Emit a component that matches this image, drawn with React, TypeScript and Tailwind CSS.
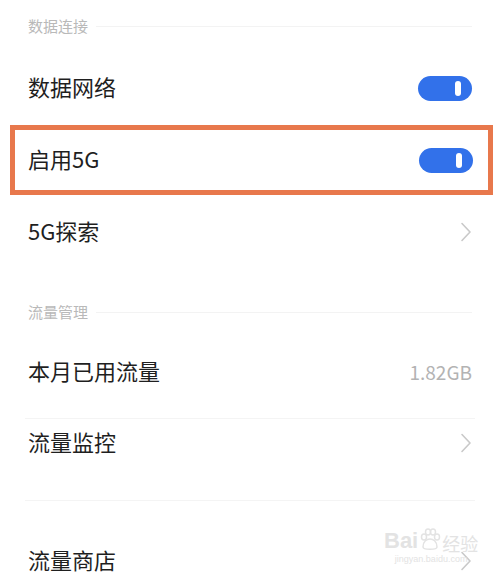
import { ReactNode } from "react";

const font = {
  fontFamily: '"Noto Sans CJK SC", "Noto Sans", sans-serif',
};

function Toggle() {
  return (
    <div className="w-[54px] h-[25px] rounded-full bg-[#3271ea] flex items-center justify-end pr-[11px]">
      <div className="w-[6px] h-[15px] rounded-full bg-white" />
    </div>
  );
}

function Chevron() {
  return (
    <svg width="12" height="20" viewBox="0 0 12 20" fill="none">
      <path
        d="M2 1.5 L10 10 L2 18.5"
        stroke="#c9c9c9"
        strokeWidth="1.6"
        strokeLinecap="round"
        strokeLinejoin="round"
      />
    </svg>
  );
}

function Paw() {
  return (
    <svg width="22" height="24" viewBox="0 0 22 24" fill="none" stroke="#e3e3e3" strokeWidth="1.5">
      <ellipse cx="5" cy="9" rx="2.5" ry="3" />
      <ellipse cx="9" cy="4" rx="2.5" ry="3" />
      <ellipse cx="14" cy="4" rx="2.5" ry="3" />
      <ellipse cx="18" cy="9" rx="2.5" ry="3" />
      <path d="M4 19 C4 13 8 11 11 11 C14 11 18 13 18 19 C18 22 4 22 4 19 Z" />
    </svg>
  );
}

function SectionHeader({ title, className }: { title: string; className: string }) {
  return (
    <div className={`flex items-center px-[28px] ${className}`}>
      <span className="text-[15px] text-[#b9b9b9] leading-none whitespace-nowrap mb-[2px]">
        {title}
      </span>
      <div className="flex-1 ml-[8px] h-px bg-[#f3f3f3]" />
    </div>
  );
}

function Row({
  label,
  right,
  className = "h-[72px]",
}: {
  label: string;
  right?: ReactNode;
  className?: string;
}) {
  return (
    <div className={`flex items-center justify-between px-[28px] ${className}`}>
      <span className="text-[22px] text-[#1f1f1f] leading-none mb-[5px]">{label}</span>
      {right}
    </div>
  );
}

export default function App() {
  return (
    <div className="w-[500px] h-[584px] bg-white overflow-hidden relative" style={font}>
      <SectionHeader title="数据连接" className="h-[52px]" />
      <Row label="数据网络" right={<Toggle />} />

      <div className="h-[72px] py-px pl-[10px] pr-[7px]">
        <div className="h-full border-[5px] border-[#e8784c] flex items-center justify-between pl-[13px] pr-[15px]">
          <span className="text-[22px] text-[#1f1f1f] leading-none mb-[5px]">启用5G</span>
          <Toggle />
        </div>
      </div>

      <Row label="5G探索" right={<Chevron />} />

      <SectionHeader title="流量管理" className="h-[68px] pt-[20px]" />
      <Row
        label="本月已用流量"
        right={<span className="text-[19px] text-[#b3b3b3] leading-none mb-[2px]">1.82GB</span>}
      />
      <div className="mt-[10px] mx-[25px] h-px bg-[#f4f4f4]" />
      <Row label="流量监控" right={<Chevron />} className="h-[48px]" />
      <div className="mt-[33px] mx-[25px] h-px bg-[#f4f4f4]" />
      <Row label="流量商店" right={<Chevron />} className="h-[120px]" />

      <div className="absolute left-[384px] top-[528px] flex flex-col items-center text-[#e3e3e3] pointer-events-none">
        <div className="flex items-end leading-none">
          <span className="text-[22px] font-bold" style={{ fontFamily: '"Liberation Sans", sans-serif' }}>
            Bai
          </span>
          <span className="mx-[1px]">
            <Paw />
          </span>
          <span className="text-[18px]">经验</span>
        </div>
        <span
          className="text-[9px] leading-none mt-[3px]"
          style={{ fontFamily: '"Liberation Sans", sans-serif' }}
        >
          jingyan.baidu.com
        </span>
      </div>
    </div>
  );
}
